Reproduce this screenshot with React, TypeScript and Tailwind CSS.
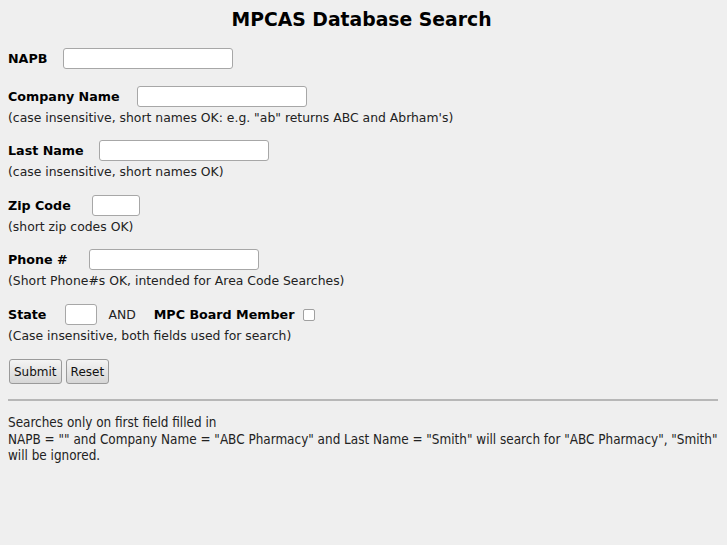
import React from 'react';

const font = { fontFamily: '"DejaVu Sans", Verdana, sans-serif' };

const Input: React.FC<{ width: string }> = ({ width }) => (
  <input
    type="text"
    className={`${width} h-[21px] bg-white border border-[#a7a7a7] rounded-[3px] outline-none`}
  />
);

const Help: React.FC<{ children: React.ReactNode }> = ({ children }) => (
  <div className="text-[12.4px] leading-[17px] text-[#222] mt-[2px]">{children}</div>
);

const App: React.FC = () => {
  return (
    <div className="min-h-[545px] bg-[#efefef] text-black px-2 pt-[8px]" style={font}>
      <h1 className="text-center text-[18.8px] font-bold leading-6 pr-1">MPCAS Database Search</h1>

      <form className="mt-[16px]" onSubmit={(e) => e.preventDefault()}>
        <div className="flex items-center gap-[16px]">
          <span className="text-[12.7px] font-bold">NAPB</span>
          <Input width="w-[170px]" />
        </div>

        <div className="mt-[17px]">
          <div className="flex items-center gap-[17px]">
            <span className="text-[12.7px] font-bold">Company Name</span>
            <Input width="w-[170px]" />
          </div>
          <Help>(case insensitive, short names OK: e.g. "ab" returns ABC and Abrham's)</Help>
        </div>

        <div className="mt-[14px]">
          <div className="flex items-center gap-[15px]">
            <span className="text-[12.7px] font-bold">Last Name</span>
            <Input width="w-[170px]" />
          </div>
          <Help>(case insensitive, short names OK)</Help>
        </div>

        <div className="mt-[15px]">
          <div className="flex items-center gap-[21px]">
            <span className="text-[12.7px] font-bold">Zip Code</span>
            <Input width="w-[48px]" />
          </div>
          <Help>(short zip codes OK)</Help>
        </div>

        <div className="mt-[14px]">
          <div className="flex items-center gap-[21px]">
            <span className="text-[12.7px] font-bold">Phone #</span>
            <Input width="w-[170px]" />
          </div>
          <Help>(Short Phone#s OK, intended for Area Code Searches)</Help>
        </div>

        <div className="mt-[15px]">
          <div className="flex items-center">
            <span className="text-[12.7px] font-bold">State</span>
            <span className="ml-[19px] flex">
              <Input width="w-[32px]" />
            </span>
            <span className="text-[12.4px] ml-[11px] mt-[2px] text-[#222]">AND</span>
            <span className="text-[12.7px] font-bold ml-[18px]">MPC Board Member</span>
            <span className="ml-[8px] w-[12px] h-[12px] bg-white border border-[#a0a0a0] rounded-[2px]" />
          </div>
          <Help>(Case insensitive, both fields used for search)</Help>
        </div>

        <div className="mt-[15px] ml-[1px] flex gap-[4px]">
          <button
            type="submit"
            className="h-[25px] px-[4px] text-[12px] text-[#111] border border-[#9a9a9a] rounded-[3px] bg-gradient-to-b from-[#f4f4f4] to-[#d6d6d6]"
          >
            Submit
          </button>
          <button
            type="reset"
            className="h-[25px] px-[4px] text-[12px] text-[#111] border border-[#9a9a9a] rounded-[3px] bg-gradient-to-b from-[#f4f4f4] to-[#d6d6d6]"
          >
            Reset
          </button>
        </div>
      </form>

      <hr className="mt-[15px] mr-[1px] border-0 border-t-2 border-[#b7b7b7]" />

      <div
        className="mt-[14px] text-[13.4px] leading-[16.5px] text-[#222]"
        style={{ fontFamily: '"DejaVu Sans Condensed", "DejaVu Sans", sans-serif', fontStretch: 'condensed' }}
      >
        <div>Searches only on first field filled in</div>
        <div>
          NAPB = "" and Company Name = "ABC Pharmacy" and Last Name = "Smith" will search for "ABC Pharmacy", "Smith"
          will be ignored.
        </div>
      </div>
    </div>
  );
};

export default App;
